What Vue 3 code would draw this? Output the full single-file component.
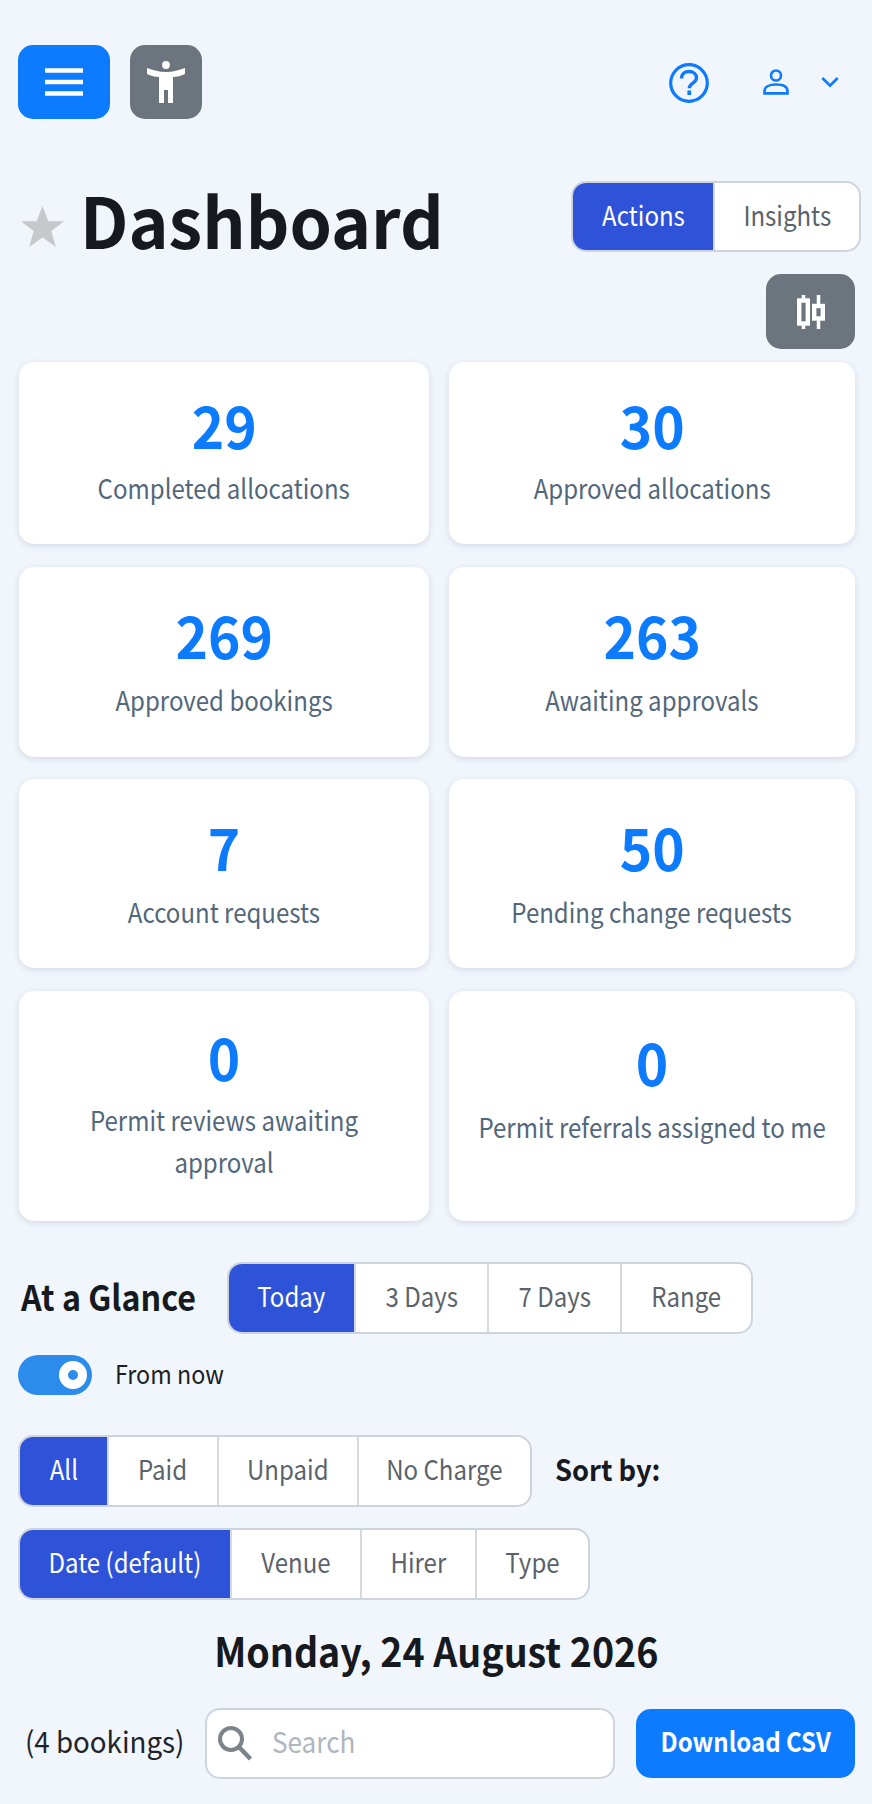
<script setup>
const cards = [
  { n: '29', l: 'Completed allocations', c: 'p30' },
  { n: '30', l: 'Approved allocations', c: 'p30' },
  { n: '269', l: 'Approved bookings', c: 'p35' },
  { n: '263', l: 'Awaiting approvals', c: 'p35' },
  { n: '7', l: 'Account requests', c: 'p35' },
  { n: '50', l: 'Pending change requests', c: 'p35' },
  { n: '0', l: 'Permit reviews awaiting approval', c: 'p33' },
  { n: '0', l: 'Permit referrals assigned to me', c: 'p38' }
]
const glance = ['Today', '3 Days', '7 Days', 'Range']
const pay = ['All', 'Paid', 'Unpaid', 'No Charge']
const sort = ['Date (default)', 'Venue', 'Hirer', 'Type']
</script>

<template>
  <div class="page">
    <header class="top">
      <div class="top-left">
        <button class="icon-btn menu" aria-label="Menu">
          <svg width="38" height="28" viewBox="0 0 38 28"><path d="M0 2.500h38M0 14h38M0 25.500h38" stroke="#fff" stroke-width="4.500" fill="none"/></svg>
        </button>
        <button class="icon-btn access" aria-label="Accessibility">
          <svg width="38" height="42" viewBox="0 0 38 42" fill="#fff"><circle cx="19" cy="4" r="3.900"/><path d="M0 7C6 9 12 11 19 11S32 9 38 7V13C34 15 30 16 26 16V42H21V29H17V42H12V16C8 16 4 15 0 13z"/></svg>
        </button>
      </div>
      <div class="top-right">
        <svg class="help" width="40" height="40" viewBox="0 0 40 40" fill="none" stroke="#0d7bff"><circle cx="20" cy="20" r="18.300" stroke-width="3.200"/><path d="M12.500 15.500c0-4.500 3.300-7 7.500-7s7.500 2.500 7.500 6.300c0 5.500-7.200 5.200-7.200 10.500" stroke-width="3.400"/><path d="M20.300 27.500v4.500" stroke-width="3.800"/></svg>
        <svg class="user" width="26" height="26" viewBox="0 0 26 26" fill="none" stroke="#0d7bff" stroke-width="2.600"><circle cx="13" cy="6.500" r="5"/><path d="M1.500 24.500v-2.500c0-4 4-6.500 11.500-6.500s11.500 2.500 11.500 6.500v2.500zM1.500 24.200h23"/></svg>
        <svg class="chev" width="18" height="12" viewBox="0 0 20 12" fill="none" stroke="#0d7bff" stroke-width="3"><path d="M1.500 1.500L10 10l8.500-8.500"/></svg>
      </div>
    </header>

    <section class="title-row">
      <div class="title">
        <svg class="star" width="43" height="41" viewBox="0 0 44 42"><path d="M22 0l5.900 15.500H44L31 25.700 35.700 42 22 32.300 8.300 42 13 25.700 0 15.500h16.100z" fill="#c6c8cb"/></svg>
        <h1>Dashboard</h1>
      </div>
      <div class="seg seg-view">
        <span class="on"><i class="t">Actions</i></span><span><i class="t">Insights</i></span>
      </div>
    </section>

    <div class="filter-wrap">
      <button class="icon-btn filter" aria-label="Filters">
        <svg width="30" height="34" viewBox="0 0 30 34" fill="none" stroke="#fff"><path d="M7.500 0v5M7.500 29v5M22.500 0v9M22.500 25v9" stroke-width="3.500"/><rect x="3.200" y="5.500" width="8.600" height="23" stroke-width="4.400"/><rect x="18.200" y="11" width="8.600" height="12.500" stroke-width="4.400"/></svg>
      </button>
    </div>

    <section class="cards">
      <article v-for="c in cards" :key="c.l" class="card" :class="c.c">
        <div class="num"><i class="n">{{ c.n }}</i></div>
        <div class="lbl"><i class="t">{{ c.l }}</i></div>
      </article>
    </section>

    <section class="glance">
      <h2>At a Glance</h2>
      <div class="seg seg-glance">
        <span v-for="(g, i) in glance" :key="g" :class="{ on: i === 0 }"><i class="t">{{ g }}</i></span>
      </div>
    </section>

    <div class="toggle-row">
      <span class="toggle"><span class="thumb"></span></span>
      <span class="toggle-text">From now</span>
    </div>

    <div class="pay-row">
      <div class="seg seg-pay">
        <span v-for="(g, i) in pay" :key="g" :class="{ on: i === 0 }"><i class="t">{{ g }}</i></span>
      </div>
      <strong class="sort-label">Sort by:</strong>
    </div>

    <div class="seg seg-sort">
      <span v-for="(g, i) in sort" :key="g" :class="{ on: i === 0 }"><i class="t">{{ g }}</i></span>
    </div>

    <h3 class="date"><i class="d">Monday, 24 August 2026</i></h3>

    <div class="bottom">
      <span class="count">(4 bookings)</span>
      <label class="search">
        <svg width="36" height="36" viewBox="0 0 36 36" fill="none" stroke="#7b838b" stroke-width="4"><circle cx="14" cy="14" r="11"/><path d="M22 22l11.500 12" stroke-width="4.500"/></svg>
        <span class="placeholder">Search</span>
      </label>
      <button class="download"><i class="t">Download CSV</i></button>
    </div>
  </div>
</template>

<style>
html, body { background: #f1f5fc; }
</style>

<style scoped>
.page {
  width: 872px;
  height: 1804px;
  box-sizing: border-box;
  padding: 45px 17px 0 18px;
  background: #f1f5fc;
  font-family: "Noto Sans CJK JP", "Noto Sans", sans-serif;
  color: #16191d;
  overflow: hidden;
}
h1, h2, h3 { margin: 0; }
i { font-style: normal; }
button { border: 0; padding: 0; font-family: inherit; }
.t { display: inline-block; transform: scaleX(0.89); }
.n { display: inline-block; transform: scaleX(0.95); }
.d { display: inline-block; transform: scaleX(0.94); }
.top { display: flex; justify-content: space-between; height: 74px; }
.top-left { display: flex; gap: 20px; }
.icon-btn { display: flex; align-items: center; justify-content: center; border-radius: 15px; color: #fff; }
.menu { width: 92px; height: 74px; background: #0d7bff; }
.access { width: 72px; height: 74px; background: #6c757d; }
.top-right { width: 190px; display: flex; align-items: flex-start; }
.help { margin: 18px 0 0 4px; }
.user { margin: 24px 0 0 54px; }
.chev { margin: 31px 0 0 32px; }

.title-row { display: flex; justify-content: space-between; align-items: center; height: 71px; margin: 62px -6px 0 0; }
.title { display: flex; align-items: center; }
.star { margin: 20px 16px 0 3px; flex: none; }
h1 { font-size: 70px; line-height: 71px; font-weight: 700; margin-top: 3px; transform: scaleX(0.97); transform-origin: left center; }

.seg {
  display: inline-grid;
  height: 71px;
  box-sizing: border-box;
  background: #fff;
  border: 2px solid #ced4de;
  border-radius: 15px;
  overflow: hidden;
  font-size: 27px;
  color: #5b636a;
}
.seg > span {
  display: flex;
  align-items: center;
  justify-content: center;
  padding-bottom: 4px;
  border-left: 2px solid #d5d9e0;
}
.seg > span:first-child { border-left: 0; }
.seg > .on { background: #2f53d8; color: #fff; }
.seg-view { width: 290px; grid-template-columns: 140px 1fr; }
.seg-glance { width: 526px; grid-template-columns: 125px 133px 133px 1fr; height: 72px; }
.seg-pay { width: 514px; grid-template-columns: 87px 110px 140px 1fr; height: 72px; }
.seg-sort { width: 572px; grid-template-columns: 210px 130px 115px 1fr; margin-top: 21px; display: grid; height: 72px; }

.filter-wrap { display: flex; justify-content: flex-end; margin-top: 22px; }
.filter { width: 89px; height: 75px; background: #6c757d; }

.cards {
  display: grid;
  grid-template-columns: 410px 406px;
  grid-template-rows: 182px 190px 189px 230px;
  gap: 22.5px 20px;
  margin: 13px 0 0 1px;
}
.card {
  box-sizing: border-box;
  background: #fff;
  border-radius: 15px;
  box-shadow: 0 2px 6px rgba(60, 80, 110, 0.16);
  text-align: center;
}
.p30 { padding-top: 30px; }
.p33 { padding: 33px 20px 0; }
.p35 { padding-top: 35px; }
.p38 { padding-top: 38px; }
.num { font-size: 58px; line-height: 64px; font-weight: 700; color: #0d7bff; }
.lbl { margin-top: 13px; font-size: 27px; line-height: 42px; color: #53677a; white-space: nowrap; }
.p30 .lbl { margin-top: 11px; }
.p33 .lbl { margin-top: 11px; white-space: normal; }

.glance { display: flex; align-items: center; margin: 41px 0 0 3px; }
h2 { flex: none; width: 206px; font-size: 35px; line-height: 71px; font-weight: 700; transform: scaleX(0.92) translateY(-2px); transform-origin: left center; }

.toggle-row { display: flex; align-items: center; gap: 23px; margin-top: 21px; height: 40px; }
.toggle { position: relative; display: block; width: 74px; height: 40px; border-radius: 20px; background: #2c8cec; }
.thumb {
  position: absolute;
  left: 41px;
  top: 6px;
  width: 10px;
  height: 10px;
  border: 9px solid #fff;
  border-radius: 50%;
  background: #2c8cec;
}
.toggle-text { font-size: 26px; line-height: 40px; color: #1c2024; transform: scaleX(0.895) translateY(-2px); transform-origin: left center; }

.pay-row { display: flex; align-items: center; gap: 23px; margin-top: 40px; }
.sort-label { font-size: 29px; font-weight: 700; transform: scaleX(0.94) translateY(-3px); transform-origin: left center; }

.date { margin-top: 20px; font-size: 40px; line-height: 60px; font-weight: 700; text-align: center; }

.bottom { display: flex; align-items: center; margin-top: 28px; height: 71px; }
.count { width: 187px; padding-left: 7px; padding-bottom: 6px; box-sizing: border-box; font-size: 29px; color: #20242a; transform: scaleX(0.955); transform-origin: 7px center; }
.search {
  display: flex;
  align-items: center;
  gap: 19px;
  width: 410px;
  height: 71px;
  box-sizing: border-box;
  padding-left: 10px;
  background: #fff;
  border: 2px solid #ced4de;
  border-radius: 15px;
  font-size: 29px;
  color: #aeb6bf;
}
.placeholder { padding-bottom: 6px; transform: scaleX(0.9); transform-origin: left center; }
.download {
  width: 219px;
  height: 69px;
  padding-bottom: 6px;
  margin-left: 21px;
  background: #0d7bff;
  border-radius: 15px;
  color: #fff;
  font-size: 27px;
  font-weight: 700;
}
</style>
